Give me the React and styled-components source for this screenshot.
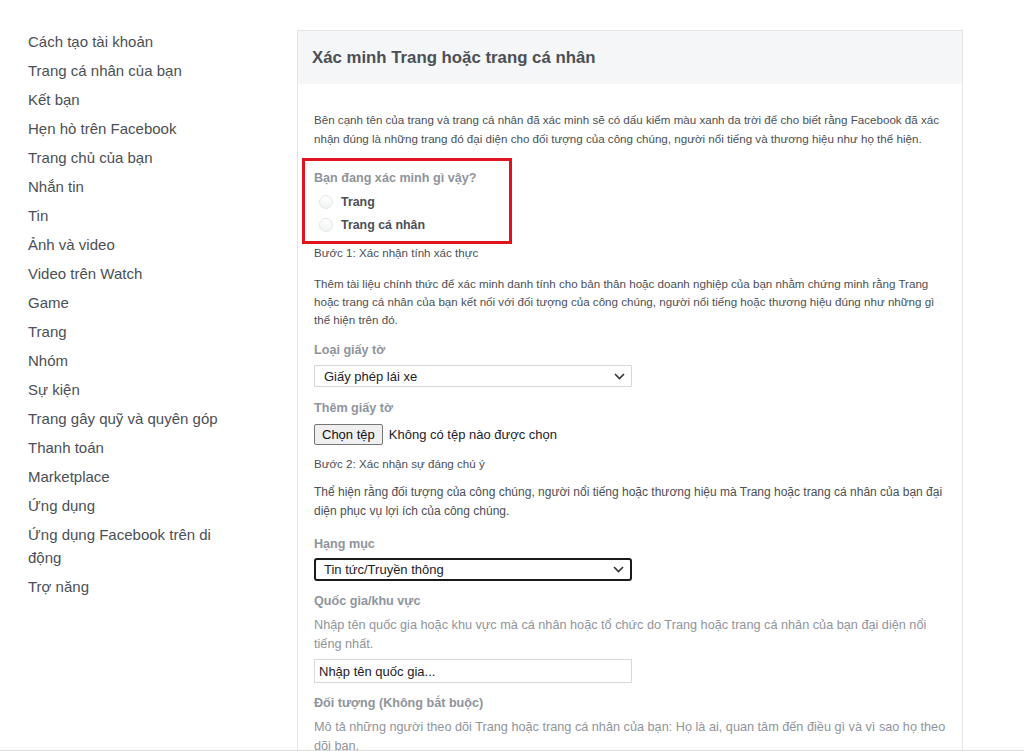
import React from 'react';
import styled, {createGlobalStyle} from 'styled-components';

const GlobalStyle = createGlobalStyle`
  html, body {
    margin: 0;
    padding: 0;
    background: #fff;
  }
  body {
    font-family: "Liberation Sans", Arial, Helvetica, sans-serif;
    color: #4b4f56;
  }
`;

const Page = styled.div`
  height: 751px;
  box-sizing: border-box;
  overflow: hidden;
  display: flex;
  align-items: flex-start;
  gap: 69px;
  padding: 30px 0 0 28px;
  border-bottom: 1px solid #dcdcdc;
`;

const Sidebar = styled.ul`
  list-style: none;
  margin: 0;
  padding: 0;
  width: 200px;
  flex-shrink: 0;
  display: flex;
  flex-direction: column;
  gap: 6px;
`;

const SideItem = styled.li`
  font-size: 15px;
  line-height: 23px;
  color: #4b4f56;
  cursor: pointer;
`;

const Panel = styled.section`
  width: 666px;
  flex-shrink: 0;
  box-sizing: border-box;
  border: 1px solid #e3e4e6;
  border-bottom: none;
  background: #fff;
`;

const PanelHeader = styled.header`
  height: 53px;
  display: flex;
  align-items: center;
  padding: 0 14px;
  background: #f5f6f7;
`;

const PanelTitle = styled.h2`
  margin: 0;
  font-size: 16.8px;
  font-weight: bold;
  color: #4b4f56;
`;

const PanelBody = styled.div`
  padding: 26px 15px 0 16px;
  display: flex;
  flex-direction: column;
`;

const Text = styled.p`
  margin: ${(p) => p.$mt ?? 0}px 0 0;
  font-size: ${(p) => p.$size ?? 11.6}px;
  line-height: ${(p) => p.$lh ?? 18}px;
  color: ${(p) => (p.$muted ? '#90949c' : '#4b4f56')};
`;

const Label = styled.div`
  margin-top: ${(p) => p.$mt ?? 12}px;
  font-size: 12.6px;
  line-height: 16px;
  font-weight: bold;
  color: #90949c;
`;

const Question = styled.div`
  position: relative;
  margin-top: 22px;

  &::after {
    content: '';
    position: absolute;
    left: -12px;
    top: -12px;
    width: 210px;
    height: 86px;
    box-sizing: border-box;
    border: 3px solid #e0141e;
    pointer-events: none;
  }
`;

const RadioList = styled.div`
  margin-top: 4px;
  display: flex;
  flex-direction: column;
`;

const RadioRow = styled.label`
  display: flex;
  align-items: center;
  gap: 8px;
  padding-left: 5px;
  height: 23px;
  font-size: 12.4px;
  font-weight: bold;
  color: #4b4f56;
`;

const RadioDot = styled.span`
  width: 14px;
  height: 14px;
  box-sizing: border-box;
  border-radius: 50%;
  border: 1px solid #e4e5e7;
  background: linear-gradient(#fff, #f1f2f3);
`;

const SelectBox = styled.div`
  margin-top: ${(p) => p.$mt ?? 7}px;
  width: 318px;
  height: ${(p) => (p.$focused ? 23 : 22)}px;
  box-sizing: border-box;
  display: flex;
  align-items: center;
  justify-content: space-between;
  padding: 0 6px 0 ${(p) => (p.$focused ? 8 : 9)}px;
  border: ${(p) => (p.$focused ? '2px solid #1a1a1a' : '1px solid #d6d8db')};
  border-radius: ${(p) => (p.$focused ? 3 : 1)}px;
  font-size: 13px;
  color: #1d2129;
  background: #fff;
`;

const Chevron = () => (
  <svg width="11" height="7" viewBox="0 0 11 7" fill="none">
    <path d="M1 1l4.5 4.5L10 1" stroke="#333" strokeWidth="1.6" />
  </svg>
);

const FileRow = styled.div`
  margin-top: 8px;
  display: flex;
  align-items: center;
  gap: 6px;
  font-size: 13px;
  color: #1d2129;
`;

const FileButton = styled.button`
  height: 21px;
  box-sizing: border-box;
  padding: 0 7px;
  font-family: inherit;
  font-size: 13px;
  color: #111;
  background: #efefef;
  border: 1px solid #767676;
  border-radius: 2px;
`;

const TextInput = styled.input`
  margin-top: 5px;
  width: 318px;
  height: 24px;
  box-sizing: border-box;
  padding: 0 4px;
  border: 1px solid #d6d8db;
  font-family: inherit;
  font-size: 13px;
  color: #1d2129;
  outline: none;

  &::placeholder {
    color: #1d2129;
  }
`;

const menu = [
  'Cách tạo tài khoản',
  'Trang cá nhân của bạn',
  'Kết bạn',
  'Hẹn hò trên Facebook',
  'Trang chủ của bạn',
  'Nhắn tin',
  'Tin',
  'Ảnh và video',
  'Video trên Watch',
  'Game',
  'Trang',
  'Nhóm',
  'Sự kiện',
  'Trang gây quỹ và quyên góp',
  'Thanh toán',
  'Marketplace',
  'Ứng dụng',
  'Ứng dụng Facebook trên di động',
  'Trợ năng',
];

const App = () => {
  return (
    <>
      <GlobalStyle />
      <Page>
        <Sidebar>
          {menu.map((item) => (
            <SideItem key={item}>{item}</SideItem>
          ))}
        </Sidebar>

        <Panel>
          <PanelHeader>
            <PanelTitle>Xác minh Trang hoặc trang cá nhân</PanelTitle>
          </PanelHeader>
          <PanelBody>
            <Text $lh={19}>
              Bên cạnh tên của trang và trang cá nhân đã xác minh sẽ có dấu kiểm màu xanh da trời để cho biết rằng
              Facebook đã xác nhận đúng là những trang đó đại diện cho đối tượng của công chúng, người nổi tiếng và
              thương hiệu như họ thể hiện.
            </Text>

            <Question>
              <Label $mt={0}>Bạn đang xác minh gì vậy?</Label>
              <RadioList>
                <RadioRow>
                  <RadioDot />
                  Trang
                </RadioRow>
                <RadioRow>
                  <RadioDot />
                  Trang cá nhân
                </RadioRow>
              </RadioList>
            </Question>

            <Text $mt={9} $lh={16}>Bước 1: Xác nhận tính xác thực</Text>
            <Text $mt={14}>
              Thêm tài liệu chính thức để xác minh danh tính cho bản thân hoặc doanh nghiệp của bạn nhằm chứng minh
              rằng Trang hoặc trang cá nhân của bạn kết nối với đối tượng của công chúng, người nổi tiếng hoặc thương
              hiệu đúng như những gì thể hiện trên đó.
            </Text>

            <Label $mt={13}>Loại giấy tờ</Label>
            <SelectBox>
              <span>Giấy phép lái xe</span>
              <Chevron />
            </SelectBox>

            <Label $mt={13}>Thêm giấy tờ</Label>
            <FileRow>
              <FileButton type="button">Chọn tệp</FileButton>
              <span>Không có tệp nào được chọn</span>
            </FileRow>

            <Text $mt={11} $lh={16}>Bước 2: Xác nhận sự đáng chú ý</Text>
            <Text $mt={11} $size={12} $lh={19}>
              Thể hiện rằng đối tượng của công chúng, người nổi tiếng hoặc thương hiệu mà Trang hoặc trang cá nhân của
              bạn đại diện phục vụ lợi ích của công chúng.
            </Text>

            <Label $mt={15}>Hạng mục</Label>
            <SelectBox $focused $mt={6}>
              <span>Tin tức/Truyền thông</span>
              <Chevron />
            </SelectBox>

            <Label $mt={12}>Quốc gia/khu vực</Label>
            <Text $mt={7} $size={12.7} $lh={19} $muted>
              Nhập tên quốc gia hoặc khu vực mà cá nhân hoặc tổ chức do Trang hoặc trang cá nhân của bạn đại diện nổi
              tiếng nhất.
            </Text>
            <TextInput placeholder="Nhập tên quốc gia..." />

            <Label $mt={12}>Đối tượng (Không bắt buộc)</Label>
            <Text $mt={7} $size={12.7} $lh={19} $muted>
              Mô tả những người theo dõi Trang hoặc trang cá nhân của bạn: Họ là ai, quan tâm đến điều gì và vì sao họ
              theo dõi bạn.
            </Text>
          </PanelBody>
        </Panel>
      </Page>
    </>
  );
};

export default App;
